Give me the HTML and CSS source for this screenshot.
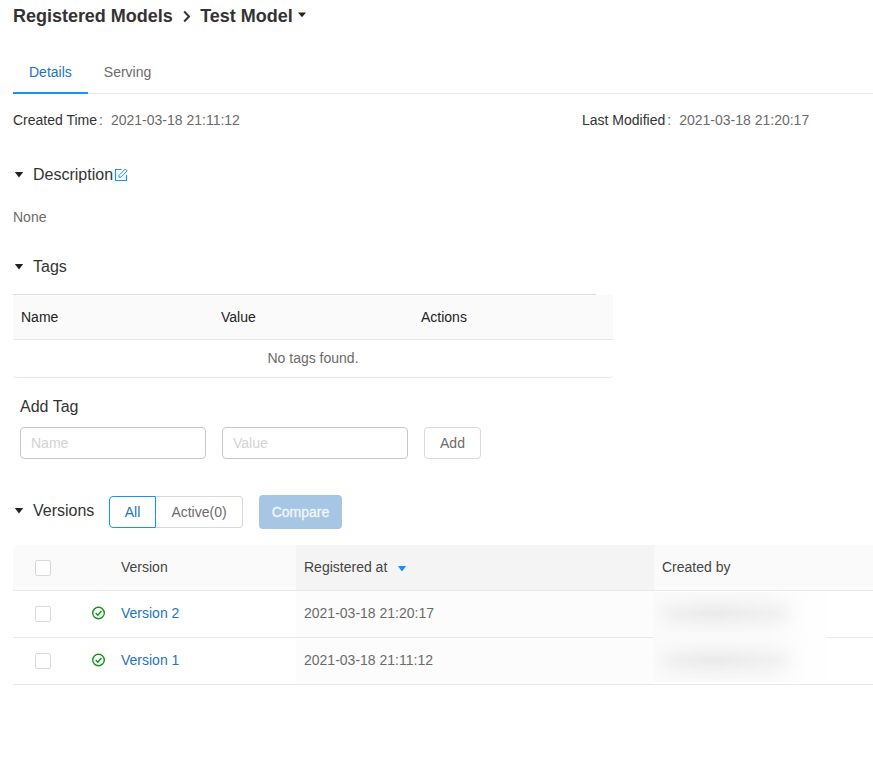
FILE: index.html
```html
<!DOCTYPE html>
<html lang="en">
<head>
<meta charset="utf-8">
<title>Test Model</title>
<link rel="stylesheet" href="styles.css">
</head>
<body>
<main class="page">
  <h1 class="breadcrumb">
    <span class="crumb">Registered Models</span>
    <svg class="chevron" viewBox="0 0 8 13" width="8" height="13"><path d="M1.200 1.500 6 6.500 1.200 11.500" fill="none" stroke="#333" stroke-width="2"/></svg>
    <span class="crumb">Test Model</span>
    <svg class="caret" viewBox="0 0 10 6" width="10" height="6"><path d="M1 .5h8L5 5.200z"/></svg>
  </h1>
  <nav class="tabs">
    <a class="tab tab-active">Details</a>
    <a class="tab">Serving</a>
  </nav>
  <div class="meta">
    <div class="meta-item"><span class="label">Created Time</span><span class="colon">:</span><span>2021-03-18 21:11:12</span></div>
    <div class="meta-item"><span class="label">Last Modified</span><span class="colon">:</span><span>2021-03-18 21:20:17</span></div>
  </div>

  <section class="description">
    <h2 class="heading">
      <svg class="caret" viewBox="0 0 10 6" width="10" height="6"><path d="M.8 0h8.400L5 5.600z"/></svg>
      <span>Description</span>
      <svg class="edit" viewBox="0 0 14 14" width="14" height="14"><path d="M7.500 1.500H1.500v11h11V7" fill="none" stroke="#1890ff" stroke-width="1.200"/><path d="M5 9.200V7.300L11.300 1l1.900 1.900L6.900 9.200z" fill="none" stroke="#1890ff"/></svg>
    </h2>
    <p class="none">None</p>
  </section>

  <section class="tags">
    <h2 class="heading">
      <svg class="caret" viewBox="0 0 10 6" width="10" height="6"><path d="M.8 0h8.400L5 5.600z"/></svg>
      <span>Tags</span>
    </h2>
    <div class="tag-table">
      <div class="tag-rule"></div>
      <div class="tag-head"><span>Name</span><span>Value</span><span>Actions</span></div>
      <div class="tag-empty">No tags found.</div>
    </div>
    <div class="add-tag">
      <h3 class="add-title">Add Tag</h3>
      <form class="add-form">
        <input class="field" placeholder="Name">
        <input class="field" placeholder="Value">
        <button class="btn" type="button">Add</button>
      </form>
    </div>
  </section>

  <section class="versions">
    <div class="version-bar">
      <h2 class="heading">
        <svg class="caret" viewBox="0 0 10 6" width="10" height="6"><path d="M.8 0h8.400L5 5.600z"/></svg>
        <span>Versions</span>
      </h2>
      <div class="switch">
        <span class="option option-on">All</span>
        <span class="option option-off">Active(0)</span>
      </div>
      <button class="compare" type="button" disabled>Compare</button>
    </div>
    <div class="grid">
      <div class="row row-head">
        <div class="cell cell-check"><span class="box"></span></div>
        <div class="cell cell-icon"></div>
        <div class="cell">Version</div>
        <div class="cell sorted">Registered at<svg class="sort" viewBox="0 0 8 5" width="8" height="5"><path d="M0 0h8L4.500 5h-1z" fill="#1890ff"/></svg></div>
        <div class="cell">Created by</div>
      </div>
      <div class="row">
        <div class="cell cell-check"><span class="box"></span></div>
        <div class="cell cell-icon"><svg viewBox="0 0 14 14" width="14" height="14"><circle cx="6.500" cy="7" r="5.800"/><path d="M3.700 7.100 5.800 9.300 9.400 5"/></svg></div>
        <div class="cell"><a class="link">Version 2</a></div>
        <div class="cell sorted">2021-03-18 21:20:17</div>
        <div class="cell cell-user"><span class="smudge"></span></div>
      </div>
      <div class="row">
        <div class="cell cell-check"><span class="box"></span></div>
        <div class="cell cell-icon"><svg viewBox="0 0 14 14" width="14" height="14"><circle cx="6.500" cy="7" r="5.800"/><path d="M3.700 7.100 5.800 9.300 9.400 5"/></svg></div>
        <div class="cell"><a class="link">Version 1</a></div>
        <div class="cell sorted">2021-03-18 21:11:12</div>
        <div class="cell cell-user"><span class="smudge"></span></div>
      </div>
      <div class="veil"></div>
    </div>
  </section>
</main>
</body>
</html>
```
FILE: styles.css
```css
* { box-sizing: border-box; }
body {
  margin: 0;
  background: #fff;
  color: #6b6b6b;
  font: 14px/20px "Liberation Sans", Arial, sans-serif;
  overflow: hidden;
}
h1, h2, h3, p { margin: 0; font-weight: 400; }
svg { display: block; flex: none; }
.page { padding-left: 13px; }
.caret { fill: #222; }

.breadcrumb {
  display: flex;
  align-items: center;
  height: 32px;
  color: #333;
  font-size: 18px;
  font-weight: 700;
}
.crumb { letter-spacing: -.02px; }
.chevron { margin: 1px 9px 0 10.5px; }
.breadcrumb .caret { margin: -3px 0 0 4px; }

.tabs {
  display: flex;
  height: 42px;
  margin-top: 20px;
  border-bottom: 1px solid #e8e8e8;
}
.tab { height: 42px; padding: 10px 16px 0; }
.tab-active { color: #2374bb; border-bottom: 2px solid #1890ff; }

.meta { display: grid; grid-template-columns: 569px 1fr; margin-top: 16px; }
.meta-item { display: flex; }
.label { color: #333; }
.colon { margin: 0 8px 0 2px; }

.heading {
  display: flex;
  align-items: center;
  height: 24px;
  color: #333;
  font-size: 16px;
}
.heading .caret { margin: 0 9px 0 1px; }
.edit { margin: 0 0 0 1px; }
.description { margin-top: 33px; }
.none { margin-top: 20px; }

.tags { margin-top: 28px; }
.tag-table { width: 600px; margin-top: 15px; border-bottom: 1px solid #e8e8e8; border-radius: 4px; }
.tag-rule { width: 583px; height: 1px; background: #ddd; }
.tag-head {
  display: grid;
  grid-template-columns: repeat(3, 200px);
  align-items: center;
  height: 45px;
  padding-left: 8px;
  background: #fafafa;
  border-bottom: 1px solid #e8e8e8;
  color: #222;
}
.tag-empty { height: 37px; line-height: 36px; text-align: center; }
.add-tag { padding: 17px 0 0 7px; }
.add-title { height: 24px; line-height: 24px; font-size: 16px; color: #333; }
.add-form { display: flex; gap: 16px; margin-top: 8px; }
.field {
  width: 186px;
  height: 32px;
  padding: 0 10px;
  border: 1px solid #c8c8c8;
  border-radius: 4px;
  font: inherit;
}
.field::placeholder { color: #d3d3d3; opacity: 1; }
.btn {
  width: 57px;
  height: 32px;
  padding: 0;
  border: 1px solid #d9d9d9;
  border-radius: 4px;
  background: #fff;
  color: #6b6b6b;
  font: inherit;
}

.version-bar { display: flex; align-items: center; height: 34px; margin-top: 36px; }
.version-bar .heading { width: 96px; margin-top: -3px; }
.switch { display: flex; height: 32px; }
.option { border: 1px solid #d9d9d9; line-height: 30px; text-align: center; }
.option-on { width: 47px; border-color: #1890ff; border-radius: 4px 0 0 4px; color: #2374bb; }
.option-off { width: 87px; border-left: 0; border-radius: 0 4px 4px 0; }
.compare {
  width: 83px;
  height: 34px;
  margin-left: 16px;
  padding: 0;
  border: 0;
  border-radius: 4px;
  background: #a7c6e4;
  color: #f2f7fb;
  font: inherit;
  -webkit-text-stroke: .3px;
}

.grid { position: relative; margin-top: 16px; }
.row {
  display: grid;
  grid-template-columns: 71px 29px 183px 358px 1fr;
  height: 47px;
  border-bottom: 1px solid #e8e8e8;
}
.row-head { height: 46px; background: #fafafa; color: #444; border-radius: 4px 0 0 0; }
.cell { display: flex; align-items: center; padding: 0 8px 2px; }
.cell-check { padding: 0 0 0 22px; }
.row-head .cell-check { padding-top: 1px; }
.box { width: 16px; height: 16px; border: 1px solid #d9d9d9; border-radius: 2px; background: #fff; }
.cell-icon svg { fill: none; stroke: #149114; stroke-width: 1.400; }
.sorted { background: #fcfcfc; }
.row-head .sorted { background: #f4f4f4; }
.sort { margin: 4px 0 0 11px; }
.link { color: #2374bb; }
.veil {
  position: absolute;
  left: 640px;
  top: 47px;
  width: 174px;
  height: 90px;
  background: linear-gradient(90deg, #fafafa 65%, #fefefe 90%);
}
.cell-user { position: relative; z-index: 1; }
.smudge { width: 128px; height: 17px; border-radius: 8px; background: linear-gradient(90deg, #f0f0f0, #e7e7e7 40%, #f1f1f1); filter: blur(7px); }
```
